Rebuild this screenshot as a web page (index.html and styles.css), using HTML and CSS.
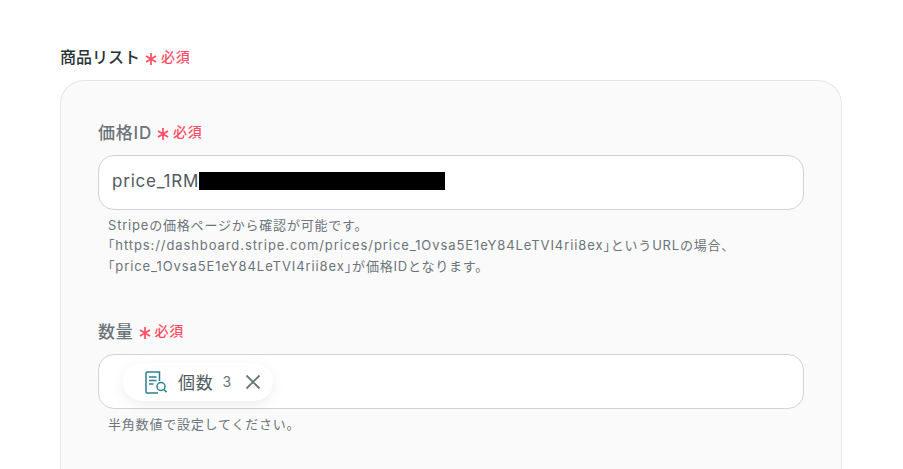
FILE: index.html
```html
<!DOCTYPE html>
<html lang="ja">
<head>
  <meta charset="UTF-8">
  <title>商品リスト</title>
  <link rel="stylesheet" href="styles.css">
</head>
<body>

  <div class="form-page">
    <div class="label label-main">
      <span class="label-text">商品リスト</span>
      <span class="required">
        <svg class="asterisk" width="12" height="14" viewBox="0 0 12 14" fill="none" stroke="#ff4d63" stroke-width="1.7"><path d="M6 1v12M1 4l10 6M11 4L1 10"/></svg>
        必須
      </span>
    </div>

    <div class="panel">
      <div class="field">
        <div class="label">
          <span class="label-text">価格ID</span>
          <span class="required">
            <svg class="asterisk" width="12" height="14" viewBox="0 0 12 14" fill="none" stroke="#ff4d63" stroke-width="1.7"><path d="M6 1v12M1 4l10 6M11 4L1 10"/></svg>
            必須
          </span>
        </div>
        <div class="input">
          <span class="input-value">price_1RM</span><span class="redacted"></span>
        </div>
        <div class="help">
          <p>Stripeの価格ページから確認が可能です。</p>
          <p><span class="bracket">「</span><span class="latin">https://dashboard.stripe.com/prices/price_1Ovsa5E1eY84LeTVI4rii8ex</span><span class="bracket">」</span>というURLの場合、</p>
          <p><span class="bracket">「</span><span class="latin">price_1Ovsa5E1eY84LeTVI4rii8ex</span><span class="bracket">」</span>が価格IDとなります。</p>
        </div>
      </div>

      <div class="field">
        <div class="label">
          <span class="label-text">数量</span>
          <span class="required">
            <svg class="asterisk" width="12" height="14" viewBox="0 0 12 14" fill="none" stroke="#ff4d63" stroke-width="1.7"><path d="M6 1v12M1 4l10 6M11 4L1 10"/></svg>
            必須
          </span>
        </div>
        <div class="input input-tags">
          <div class="chip">
            <svg class="chip-icon" width="24" height="24" viewBox="0 0 24 24" fill="none" stroke="#2b7f94" stroke-width="1.5">
              <path d="M15.5 11V2H3a1 1 0 0 0-1 1v19a1 1 0 0 0 1 1h11"/>
              <path d="M5 7h7.5M5 10.5h7.5M5 14h4.5"/>
              <circle cx="17" cy="16.5" r="4"/>
              <path d="M20 19.5l2.6 2.6"/>
            </svg>
            <span class="chip-name">個数</span>
            <span class="chip-value">3</span>
            <svg class="chip-close" width="16" height="16" viewBox="0 0 16 16" fill="none" stroke="#6a747a" stroke-width="1.8">
              <path d="M1.5 1.5l13 13M14.5 1.5l-13 13"/>
            </svg>
          </div>
        </div>
        <div class="help">
          <p>半角数値で設定してください。</p>
        </div>
      </div>
    </div>
  </div>

</body>
</html>
```

FILE: styles.css
```css
html, body {
  height: 100%;
  overflow: hidden;
}

body {
  margin: 0;
  background-color: #fff;
  font-family: Inter, "Noto Sans CJK JP", sans-serif;
  color: #283237;
  letter-spacing: 0.05em;
}

p {
  margin: 0;
}

.form-page {
  height: 100%;
  overflow: hidden;
  box-sizing: border-box;
  padding: 44px 61px 0 60px;
}

.label {
  display: flex;
  align-items: center;
  height: 24px;
  color: #6b7479;
  font-size: 17px;
  font-weight: 500;
}

.label-main {
  color: #283237;
  font-size: 16px;
  letter-spacing: 0;
  margin-bottom: 12px;
}

.required {
  display: flex;
  align-items: center;
  margin-left: 5px;
  color: #ff4d63;
  font-size: 14px;
  font-weight: 500;
  letter-spacing: 0.05em;
}

.asterisk {
  margin: 5px 4px 0 0;
}

.panel {
  background-color: #fafafb;
  border: 1px solid #e6e6e8;
  border-bottom: none;
  border-radius: 24px 24px 0 0;
  padding: 38px 37px 40px 37px;
  height: 400px;
}

.field {
  margin-bottom: 42px;
}

.input {
  display: flex;
  align-items: center;
  height: 53px;
  margin-top: 12px;
  padding: 0 13px;
  background-color: #fff;
  border: 1px solid #d0d3dc;
  border-radius: 16px;
  font-size: 17px;
  color: #4e5a60;
}

.input-value {
  margin-top: -3px;
}

.redacted {
  display: inline-block;
  width: 246px;
  height: 18px;
  margin-top: -3px;
  background-color: #000;
}

.help {
  margin-top: 5px;
  padding-left: 10px;
  font-size: 13px;
  line-height: 20.4px;
  color: #6b7479;
}

.latin {
  letter-spacing: 0.07em;
}

.bracket {
  font-feature-settings: "halt";
}

.input-tags {
  padding-left: 24px;
}

.chip {
  display: flex;
  align-items: center;
  height: 38px;
  padding: 0 12px 0 21px;
  background-color: #fff;
  border-radius: 19px;
  box-shadow: 0 4px 14px rgba(0, 0, 0, 0.07);
}

.chip-name {
  margin-left: 10px;
  font-size: 17px;
  color: #4e5a60;
}

.chip-value {
  margin-left: 9px;
  font-size: 14px;
  color: #6b7479;
}

.chip-close {
  margin-left: 13px;
}
```
